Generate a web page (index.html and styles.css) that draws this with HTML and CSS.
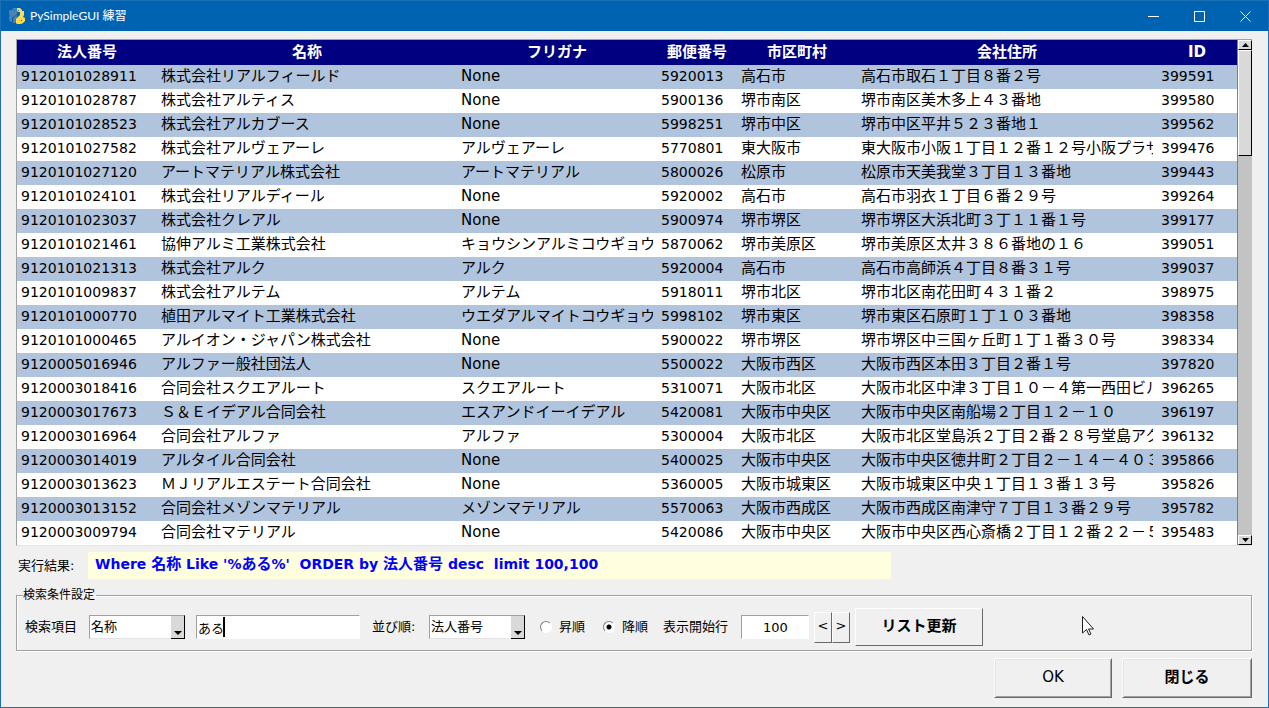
FILE: index.html
```
<!DOCTYPE html>
<html lang="ja">
<head>
<meta charset="utf-8">
<title>PySimpleGUI 練習</title>
<link rel="stylesheet" href="styles.css">
</head>
<body>
<div class="window">
  <header class="titlebar">
    <svg class="logo" viewBox="0 0 16 16" aria-hidden="true">
      <path fill="#4a84b4" d="M4 0h3l1 1v5L6 8H5L3 10v4H2l-2-2V9l1-1-1-2V3l1-1h2z"/>
      <path fill="#4a7fae" d="M1 3h3v2H1zM3 7h3v1H3zM0 10h3v2H0zM5 9l3-2v6l-2 2H4v-4z"/>
      <path fill="#ffdc4e" d="M8 0h3l2 2v1h2v4l-1 2 2 1v3l-2 2-2 1H8l-1-1v-4l2-2 2-2V4H9L8 3z"/>
      <path fill="#0063b1" d="M9 2h1v1H9zM5 2h1v1H5zM12 12h1v1h-1z"/>
    </svg>
    <h1 class="title">PySimpleGUI 練習</h1>
    <button class="winbtn" aria-label="最小化"><svg viewBox="0 0 11 11"><path d="M0 5.5h11"/></svg></button>
    <button class="winbtn" aria-label="最大化"><svg viewBox="0 0 11 11"><path d="M.5 .5h10v10h-10z"/></svg></button>
    <button class="winbtn" aria-label="閉じる"><svg viewBox="0 0 11 11"><path d="M.5 .5l10 10M10.5 .5l-10 10"/></svg></button>
  </header>

  <main class="content">
    <div class="list">
      <table class="grid">
        <colgroup><col class="c-no"><col class="c-name"><col class="c-kana"><col class="c-zip"><col class="c-city"><col class="c-addr"><col class="c-id"></colgroup>
        <thead>
          <tr><th>法人番号</th><th>名称</th><th>フリガナ</th><th>郵便番号</th><th>市区町村</th><th>会社住所</th><th>ID</th></tr>
        </thead>
        <tbody>
          <tr><td class="n">9120101028911</td><td><div>株式会社リアルフィールド</div></td><td><div>None</div></td><td class="n">5920013</td><td><div>高石市</div></td><td><div>高石市取石１丁目８番２号</div></td><td class="n">399591</td></tr>
          <tr><td class="n">9120101028787</td><td><div>株式会社アルティス</div></td><td><div>None</div></td><td class="n">5900136</td><td><div>堺市南区</div></td><td><div>堺市南区美木多上４３番地</div></td><td class="n">399580</td></tr>
          <tr><td class="n">9120101028523</td><td><div>株式会社アルカブース</div></td><td><div>None</div></td><td class="n">5998251</td><td><div>堺市中区</div></td><td><div>堺市中区平井５２３番地１</div></td><td class="n">399562</td></tr>
          <tr><td class="n">9120101027582</td><td><div>株式会社アルヴェアーレ</div></td><td><div>アルヴェアーレ</div></td><td class="n">5770801</td><td><div>東大阪市</div></td><td><div>東大阪市小阪１丁目１２番１２号小阪プラザ</div></td><td class="n">399476</td></tr>
          <tr><td class="n">9120101027120</td><td><div>アートマテリアル株式会社</div></td><td><div>アートマテリアル</div></td><td class="n">5800026</td><td><div>松原市</div></td><td><div>松原市天美我堂３丁目１３番地</div></td><td class="n">399443</td></tr>
          <tr><td class="n">9120101024101</td><td><div>株式会社リアルディール</div></td><td><div>None</div></td><td class="n">5920002</td><td><div>高石市</div></td><td><div>高石市羽衣１丁目６番２９号</div></td><td class="n">399264</td></tr>
          <tr><td class="n">9120101023037</td><td><div>株式会社クレアル</div></td><td><div>None</div></td><td class="n">5900974</td><td><div>堺市堺区</div></td><td><div>堺市堺区大浜北町３丁１１番１号</div></td><td class="n">399177</td></tr>
          <tr><td class="n">9120101021461</td><td><div>協伸アルミ工業株式会社</div></td><td><div>キョウシンアルミコウギョウ</div></td><td class="n">5870062</td><td><div>堺市美原区</div></td><td><div>堺市美原区太井３８６番地の１６</div></td><td class="n">399051</td></tr>
          <tr><td class="n">9120101021313</td><td><div>株式会社アルク</div></td><td><div>アルク</div></td><td class="n">5920004</td><td><div>高石市</div></td><td><div>高石市高師浜４丁目８番３１号</div></td><td class="n">399037</td></tr>
          <tr><td class="n">9120101009837</td><td><div>株式会社アルテム</div></td><td><div>アルテム</div></td><td class="n">5918011</td><td><div>堺市北区</div></td><td><div>堺市北区南花田町４３１番２</div></td><td class="n">398975</td></tr>
          <tr><td class="n">9120101000770</td><td><div>植田アルマイト工業株式会社</div></td><td><div>ウエダアルマイトコウギョウ</div></td><td class="n">5998102</td><td><div>堺市東区</div></td><td><div>堺市東区石原町１丁１０３番地</div></td><td class="n">398358</td></tr>
          <tr><td class="n">9120101000465</td><td><div>アルイオン・ジャパン株式会社</div></td><td><div>None</div></td><td class="n">5900022</td><td><div>堺市堺区</div></td><td><div>堺市堺区中三国ヶ丘町１丁１番３０号</div></td><td class="n">398334</td></tr>
          <tr><td class="n">9120005016946</td><td><div>アルファー般社団法人</div></td><td><div>None</div></td><td class="n">5500022</td><td><div>大阪市西区</div></td><td><div>大阪市西区本田３丁目２番１号</div></td><td class="n">397820</td></tr>
          <tr><td class="n">9120003018416</td><td><div>合同会社スクエアルート</div></td><td><div>スクエアルート</div></td><td class="n">5310071</td><td><div>大阪市北区</div></td><td><div>大阪市北区中津３丁目１０－４第一西田ビル</div></td><td class="n">396265</td></tr>
          <tr><td class="n">9120003017673</td><td><div>Ｓ＆Ｅイデアル合同会社</div></td><td><div>エスアンドイーイデアル</div></td><td class="n">5420081</td><td><div>大阪市中央区</div></td><td><div>大阪市中央区南船場２丁目１２－１０</div></td><td class="n">396197</td></tr>
          <tr><td class="n">9120003016964</td><td><div>合同会社アルファ</div></td><td><div>アルファ</div></td><td class="n">5300004</td><td><div>大阪市北区</div></td><td><div>大阪市北区堂島浜２丁目２番２８号堂島アク</div></td><td class="n">396132</td></tr>
          <tr><td class="n">9120003014019</td><td><div>アルタイル合同会社</div></td><td><div>None</div></td><td class="n">5400025</td><td><div>大阪市中央区</div></td><td><div>大阪市中央区徳井町２丁目２－１４－４０３</div></td><td class="n">395866</td></tr>
          <tr><td class="n">9120003013623</td><td><div>ＭＪリアルエステート合同会社</div></td><td><div>None</div></td><td class="n">5360005</td><td><div>大阪市城東区</div></td><td><div>大阪市城東区中央１丁目１３番１３号</div></td><td class="n">395826</td></tr>
          <tr><td class="n">9120003013152</td><td><div>合同会社メゾンマテリアル</div></td><td><div>メゾンマテリアル</div></td><td class="n">5570063</td><td><div>大阪市西成区</div></td><td><div>大阪市西成区南津守７丁目１３番２９号</div></td><td class="n">395782</td></tr>
          <tr><td class="n">9120003009794</td><td><div>合同会社マテリアル</div></td><td><div>None</div></td><td class="n">5420086</td><td><div>大阪市中央区</div></td><td><div>大阪市中央区西心斎橋２丁目１２番２２－５</div></td><td class="n">395483</td></tr>
        </tbody>
      </table>
      <div class="scrollbar">
        <button class="arrow" aria-label="上へ"><svg viewBox="0 0 7 4"><path d="M0 4h7L3.500 0z"/></svg></button>
        <div class="thumb"></div>
        <div class="track"></div>
        <button class="arrow" aria-label="下へ"><svg viewBox="0 0 7 4"><path d="M0 0h7L3.500 4z"/></svg></button>
      </div>
    </div>

    <div class="result">
      <span class="result-label">実行結果:</span>
      <output class="query">Where <span class="ja">名称</span> Like '%<span class="ja">ある</span>%'&nbsp; ORDER by <span class="ja">法人番号</span> desc&nbsp; limit 100,100</output>
    </div>

    <fieldset class="conditions">
      <legend>検索条件設定</legend>
      <div class="controls">
        <label class="label-item" for="item">検索項目</label>
        <span class="combo"><select id="item"><option>名称</option><option>法人番号</option></select></span>
        <span class="keyword"><input id="keyword" type="text" value="ある" aria-label="検索文字"><i class="caret"></i></span>
        <label class="label-sort" for="sort">並び順:</label>
        <span class="combo"><select id="sort"><option>法人番号</option><option>名称</option></select></span>
        <label class="radio radio-asc"><input type="radio" name="dir">昇順</label>
        <label class="radio radio-desc"><input type="radio" name="dir" checked>降順</label>
        <label class="label-start" for="start">表示開始行</label>
        <input class="start" id="start" type="text" value="100">
        <button class="step">&lt;</button><button class="step">&gt;</button>
        <button class="update">リスト更新</button>
      </div>
    </fieldset>

    <div class="actions">
      <button class="action ok">OK</button>
      <button class="action close">閉じる</button>
    </div>
  </main>
  <svg class="pointer" viewBox="0 0 12 20" aria-hidden="true"><path d="M.5 .5v16.500l4-3.500 2.500 5.500 2-1-2.500-5h5z"/></svg>
</div>
</body>
</html>
```
FILE: styles.css
```
* { box-sizing: border-box; }

body {
  margin: 0;
  background: #f0f0f0;
  color: #000;
  font: 13px/20px "DejaVu Sans", "Noto Sans CJK JP", sans-serif;
}

button, input, select { font: inherit; color: inherit; margin: 0; padding: 0; border-radius: 0; }

.window {
  position: relative;
  min-height: 100vh;
  border: 1px solid #1a6fb5;
}

.titlebar {
  display: flex;
  align-items: center;
  height: 30px;
  padding-left: 8px;
  background: #0063b1;
  color: #fff;
}
.logo { width: 16px; height: 16px; margin-right: 5px; }
.title { flex: 1; margin: 0; font: 12px/20px Lato, "Noto Sans CJK JP", sans-serif; }
.winbtn { width: 46px; height: 30px; border: 0; background: none; display: grid; place-items: center; }
.winbtn svg { width: 11px; height: 11px; fill: none; stroke: #fff; }

.content { padding: 8px 16px 8px 15px; }

.list {
  display: flex;
  border: 1px solid #a0a0a0;
  border-right: 0;
  border-bottom-color: #e3e3e3;
  background: #fff;
}
.grid {
  flex: 1;
  width: 100%;
  min-width: 0;
  table-layout: fixed;
  border-collapse: collapse;
  font-size: 15px;
}
.c-no { width: 140px; }
.c-name, .c-addr { width: 300px; }
.c-kana { width: 200px; }
.c-zip, .c-id { width: 80px; }
.c-city { width: 120px; }
.grid th {
  height: 25px;
  padding: 0 0 2px;
  background: #000080;
  color: #fff;
  line-height: 20px;
}
.grid td {
  height: 24px;
  padding: 0 4px 2px;
  line-height: 22px;
  white-space: nowrap;
}
.grid td div { height: 22px; overflow: hidden; }
.grid td.n { font-size: 14px; }
.grid tbody tr:nth-child(odd) { background: #b0c4de; }

.scrollbar {
  display: flex;
  flex-direction: column;
  width: 15px;
  border-left: 1px solid #808080;
  background: #c3c3c3;
}
.arrow, .thumb {
  border: 1px solid #fff;
  border-right-color: #000;
  border-bottom-color: #000;
  background: #d9d9d9;
}
.arrow { display: grid; place-items: center; height: 10px; }
.arrow svg { width: 7px; height: 4px; }
.thumb { flex: 105; }
.track { flex: 382; }

.result { display: flex; align-items: center; margin-top: 6px; }
.result-label { width: 72px; padding-left: 2px; }
.query {
  width: 65%;
  padding: 0 7px 2px;
  background: #ffffe0;
  color: #00f;
  font-size: 14px;
  line-height: 25px;
  font-weight: bold;
  white-space: nowrap;
}
.query .ja { font-size: 15px; line-height: 20px; }

.conditions {
  margin: 6px 0 0;
  padding: 2px 6px 3px;
  border: 1px solid #a0a0a0;
  box-shadow: 1px 1px #fff, inset 1px 1px #fff;
}
.conditions legend { padding: 0 1px 0 0; line-height: 20px; font-size: 12px; }
.controls { display: flex; align-items: center; height: 40px; }
.controls label { padding-left: 2px; white-space: nowrap; }
.label-item { width: 66px; }
.label-sort { width: 59px; margin-left: 10px; }
.label-start { width: 80px; }

.combo { position: relative; width: 96px; height: 24px; margin-right: 11px; }
.combo select {
  appearance: none;
  width: 100%;
  height: 24px;
  padding-left: 1px;
  border: 1px solid #a0a0a0;
  border-right-color: #000;
  border-bottom-color: #e3e3e3;
  background: #fff;
}
.combo::before {
  content: "";
  position: absolute;
  top: 1px;
  right: 0;
  width: 13px;
  height: 22px;
  border-right: 1px solid #000;
  border-bottom: 1px solid #000;
  background: #d9d9d9;
  pointer-events: none;
}
.combo::after {
  content: "";
  position: absolute;
  right: 3px;
  bottom: 4px;
  border: 4px solid transparent;
  border-top: 4px solid #000;
  border-bottom: 0;
  pointer-events: none;
}

.keyword { position: relative; width: 164px; }
.keyword input, .start {
  display: block;
  width: 100%;
  height: 24px;
  padding-left: 1px;
  border: 1px solid #a0a0a0;
  border-right-color: #fff;
  border-bottom-color: #fff;
  background: #fff;
}
.caret { position: absolute; left: 27px; top: 2px; width: 2px; height: 20px; background: #000; }
.controls .start { width: 68px; text-align: center; }

.radio { display: flex; align-items: center; }
.radio input {
  appearance: none;
  width: 12px;
  height: 12px;
  margin-right: 7px;
  border: 1px solid #808080;
  border-right-color: #fff;
  border-bottom-color: #fff;
  border-radius: 50%;
  background: #fff;
}
.radio input:checked { background: radial-gradient(circle, #000 2px, #fff 3px); }
.radio-asc { width: 63px; margin-left: 2px; }
.radio-desc { width: 60px; }

.step, .update {
  border: 1px solid #fff;
  border-right-color: #696969;
  border-bottom-color: #696969;
  background: #f0f0f0;
}
.step { width: 18px; height: 31px; padding-bottom: 2px; }
.start + .step { margin-left: 5px; }
.update { width: 128px; height: 38px; margin-left: 5px; padding-bottom: 2px; font-size: 15px; font-weight: bold; }

.actions { display: flex; justify-content: flex-end; gap: 10px; margin-top: 7px; }
.action {
  height: 40px;
  padding-bottom: 2px;
  border: 1px solid #fff;
  border-right-color: #696969;
  border-bottom-color: #696969;
  background: #f0f0f0;
  box-shadow: inset 1px 1px #e3e3e3, inset -1px -1px #a0a0a0;
  font-size: 15px;
}
.ok { width: 118px; }
.close { width: 130px; font-weight: bold; }

.pointer { position: absolute; left: 1081px; top: 615px; width: 12px; height: 20px; fill: #fff; stroke: #1c1c28; }
```
